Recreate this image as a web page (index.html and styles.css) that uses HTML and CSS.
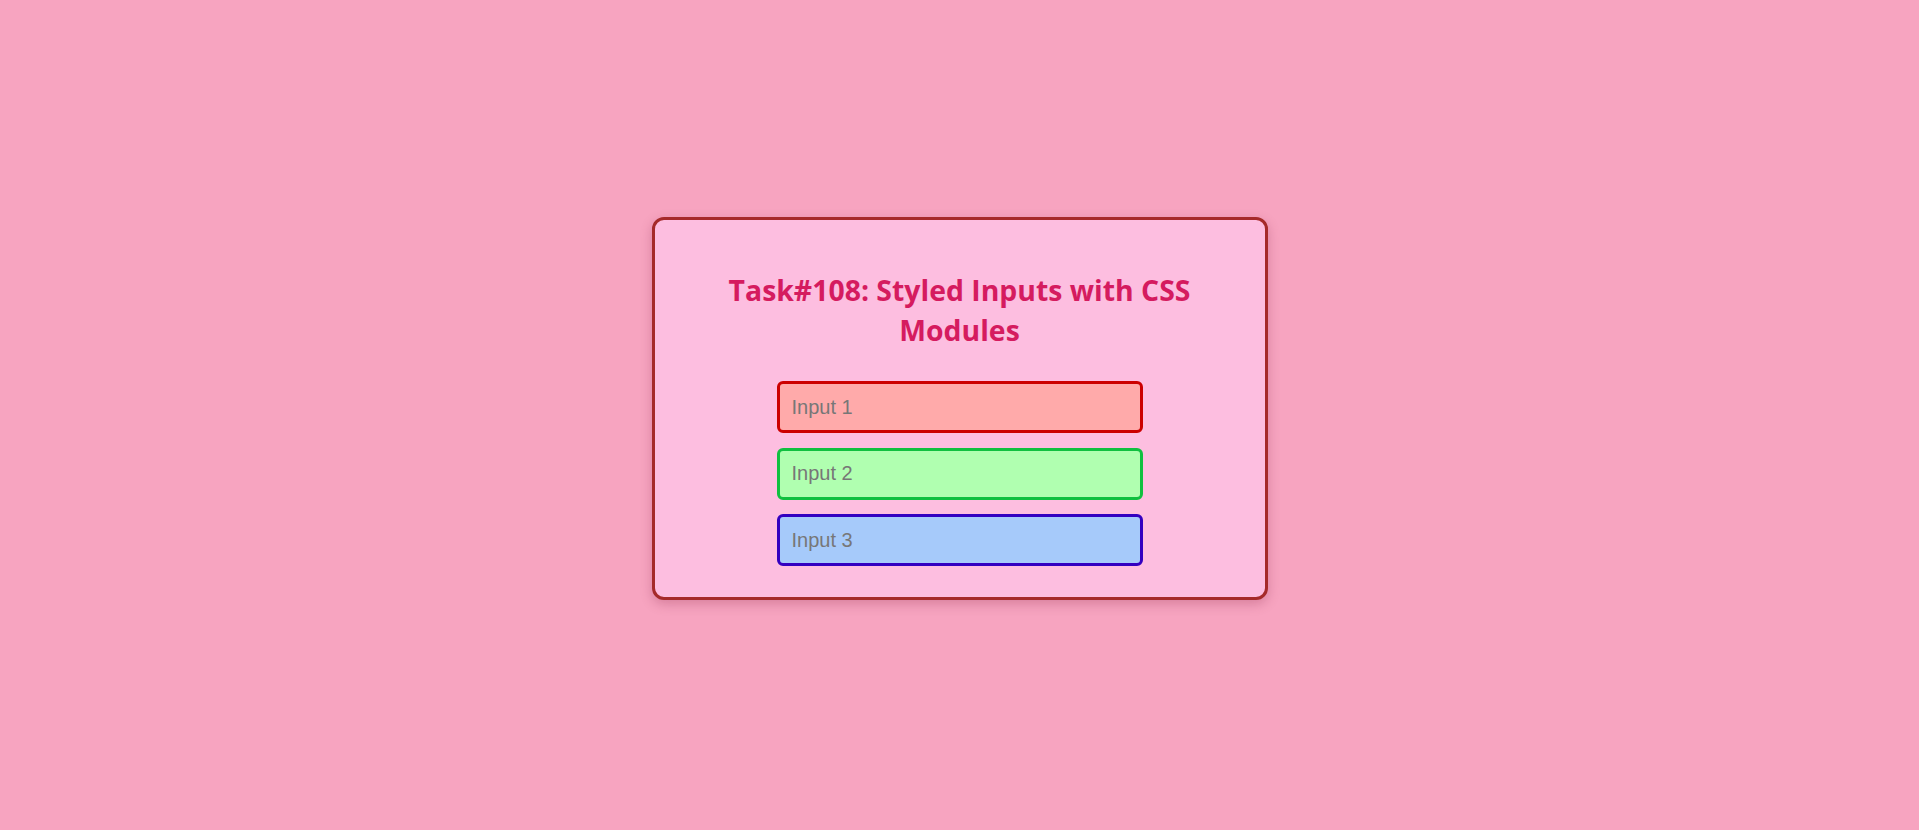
FILE: index.html
```html
<!DOCTYPE html>
<html lang="en">
<head>
<meta charset="utf-8">
<title>Task#108: Styled Inputs with CSS Modules</title>
<link rel="stylesheet" href="styles.css">
</head>
<body>
  <div class="page">
    <div class="card">
      <h1 class="title">Task#108: Styled Inputs with CSS Modules</h1>
      <div class="inputs">
        <input class="field field-red" type="text" placeholder="Input 1">
        <input class="field field-green" type="text" placeholder="Input 2">
        <input class="field field-blue" type="text" placeholder="Input 3">
      </div>
    </div>
  </div>
</body>
</html>
```

FILE: styles.css
```css
html, body {
  margin: 0;
  padding: 0;
}

body {
  background: #f7a4c0;
  min-height: 100vh;
  font-family: "Liberation Sans", Arial, sans-serif;
}

.page {
  display: flex;
  justify-content: center;
  padding-top: 217px;
}

.card {
  box-sizing: border-box;
  width: 616px;
  background: #fdbee0;
  border: 3px solid #a52a2a;
  border-radius: 12px;
  box-shadow: 0 4px 12px rgba(120, 20, 50, 0.25);
  padding: 50px 40px 31px;
  display: flex;
  flex-direction: column;
  align-items: center;
}

.title {
  margin: 0 0 31px;
  font-family: "Open Sans", "Noto Sans", sans-serif;
  font-weight: 700;
  font-size: 28.4px;
  line-height: 40px;
  color: #d51b5f;
  text-align: center;
}

.inputs {
  display: flex;
  flex-direction: column;
  gap: 14.5px;
}

.field {
  box-sizing: border-box;
  width: 366px;
  height: 52px;
  padding: 0 12px;
  border: 3px solid;
  border-radius: 6px;
  font-family: "Liberation Sans", Arial, sans-serif;
  font-size: 20px;
  color: #333;
  outline: none;
}

.field::placeholder {
  color: #777777;
}

.field-red {
  background: #ffaaaa;
  border-color: #cc0000;
}

.field-green {
  background: #b0ffb0;
  border-color: #10c040;
}

.field-blue {
  background: #a6cafa;
  border-color: #3300c0;
}
```
